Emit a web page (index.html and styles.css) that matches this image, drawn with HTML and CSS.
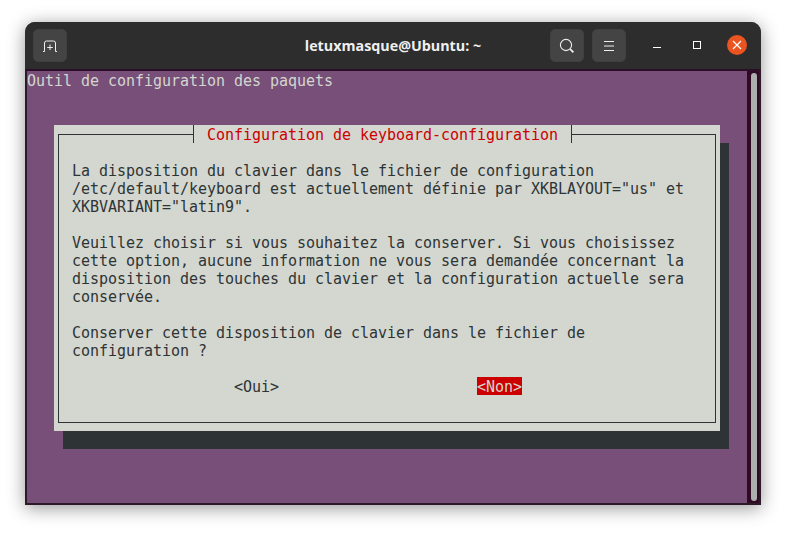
FILE: index.html
```html
<!DOCTYPE html>
<html lang="fr">
<head>
<meta charset="utf-8">
<title>letuxmasque@Ubuntu: ~</title>
<link rel="stylesheet" href="styles.css">
</head>
<body>
<div class="window">
  <header class="titlebar">
    <div class="bar-left">
      <div class="tool-btn">
        <svg width="16" height="16" viewBox="0 0 16 16" fill="none" stroke="#eee" stroke-width="1"><path d="M1 13.5h1.5V5a2 2 0 0 1 2-2h7a2 2 0 0 1 2 2v8.5H15"/><path d="M8 6.5v5.5M5.2 9.5h5.6"/></svg>
      </div>
    </div>
    <div class="title">letuxmasque@Ubuntu: ~</div>
    <div class="bar-right">
      <div class="tool-btn">
        <svg width="16" height="16" viewBox="0 0 16 16" fill="none" stroke="#eee"><circle cx="7" cy="7" r="5.6" stroke-width="1.1"/><path d="M11.2 11.2l3.2 3.2" stroke-width="1.8"/></svg>
      </div>
      <div class="tool-btn">
        <svg width="16" height="16" viewBox="0 0 16 16" fill="none" stroke="#eee" stroke-width="1"><path d="M3 3.5h10M3 8h10M3 12.5h10"/></svg>
      </div>
      <div class="wm-group">
        <div class="wm-btn"><svg width="16" height="16" viewBox="0 0 16 16" fill="none" stroke="#fff" stroke-width="1"><path d="M4 10.5h8"/></svg></div>
        <div class="wm-btn"><svg width="16" height="16" viewBox="0 0 16 16" fill="none" stroke="#fff" stroke-width="1"><rect x="4.5" y="4.5" width="7" height="7"/></svg></div>
        <div class="wm-btn"><div class="close"><svg width="10" height="10" viewBox="0 0 10 10" fill="none" stroke="#fff" stroke-width="1.2"><path d="M1 1l8 8M9 1l-8 8"/></svg></div></div>
      </div>
    </div>
  </header>
  <div class="term-area">
    <main class="terminal">
      <div class="top-line">Outil de configuration des paquets</div>
      <section class="dialog">
        <div class="dialog-title">Configuration de keyboard-configuration</div>
        <div class="frame">
          <pre class="message">La disposition du clavier dans le fichier de configuration
/etc/default/keyboard est actuellement définie par XKBLAYOUT="us" et
XKBVARIANT="latin9".

Veuillez choisir si vous souhaitez la conserver. Si vous choisissez
cette option, aucune information ne vous sera demandée concernant la
disposition des touches du clavier et la configuration actuelle sera
conservée.

Conserver cette disposition de clavier dans le fichier de
configuration ?</pre>
          <div class="choices">
            <span class="choice">&lt;Oui&gt;</span>
            <span class="choice selected">&lt;Non&gt;</span>
          </div>
        </div>
      </section>
    </main>
    <aside class="scrollbar"><div class="thumb"></div></aside>
  </div>
</div>
</body>
</html>
```
FILE: styles.css
```css
* { box-sizing: border-box; }
html, body { margin: 0; background: #fff; }
body { padding: 22px 25px 28px; overflow: hidden; }
.window {
  width: 736px;
  height: 483px;
  display: flex;
  flex-direction: column;
  border-radius: 10px 10px 0 0;
  background: #2d2d2d;
  box-shadow: 0 3px 18px rgba(0, 0, 0, .42);
  overflow: hidden;
}
.titlebar {
  flex: none;
  height: 47px;
  display: grid;
  grid-template-columns: 1fr auto 1fr;
  align-items: center;
  padding: 0 8px;
  background: #2d2d2d;
}
.bar-left { display: flex; }
.bar-right { display: flex; justify-content: flex-end; gap: 8px; margin-right: -4px; }
.tool-btn {
  width: 34px;
  height: 33px;
  display: flex;
  align-items: center;
  justify-content: center;
  background: #444;
  border: 1px solid #404040;
  border-radius: 5px;
}
.title {
  font: bold 14.3px "Open Sans", "Noto Sans", sans-serif;
  color: #f0f0f0;
}
.wm-group { display: flex; margin-left: 3px; }
.wm-btn { width: 40px; height: 32px; display: flex; align-items: center; justify-content: center; }
.close {
  width: 20px;
  height: 20px;
  border-radius: 50%;
  background: #e95420;
  display: flex;
  align-items: center;
  justify-content: center;
}
.term-area {
  flex: 1;
  display: flex;
  min-height: 0;
  border: 2px solid #2c1a2a;
  border-top: 2px solid #2b0f26;
}
.terminal {
  width: 720px;
  background: #774f78;
  font: 15px/18px "DejaVu Sans Mono", monospace;
  letter-spacing: -.03px;
  color: #d3d7cf;
}
.top-line { height: 18px; padding-top: 1px; }
.dialog {
  position: relative;
  width: 666px;
  height: 306px;
  margin: 36px 0 0 27px;
  padding: 9px 4px 8px;
  background: #d3d7cf;
  color: #2e3436;
  box-shadow: 9px 18px 0 #2e3436;
  display: flex;
}
.dialog-title {
  position: absolute;
  left: 139px;
  top: 0;
  width: 379px;
  height: 18px;
  padding: 1px 0 0 13px;
  background: #d3d7cf;
  border-left: 1px solid #2e3436;
  border-right: 1px solid #2e3436;
  color: #cc0000;
}
.frame {
  flex: 1;
  border: 1px solid #2e3436;
  padding: 27px 13px 0;
}
.message { margin: 0; font: inherit; letter-spacing: inherit; }
.choices { display: flex; gap: 198px; margin-top: 17px; padding-left: 162px; }
.choice { width: 45px; height: 18px; padding-top: 1px; }
.selected { background: #cc0000; color: #d3d7cf; }
.scrollbar {
  flex: 1;
  background: #300a24;
  padding: 2px 2px 2px 4px;
}
.thumb { height: 100%; background: #aeaeae; border-radius: 3px; }
```
